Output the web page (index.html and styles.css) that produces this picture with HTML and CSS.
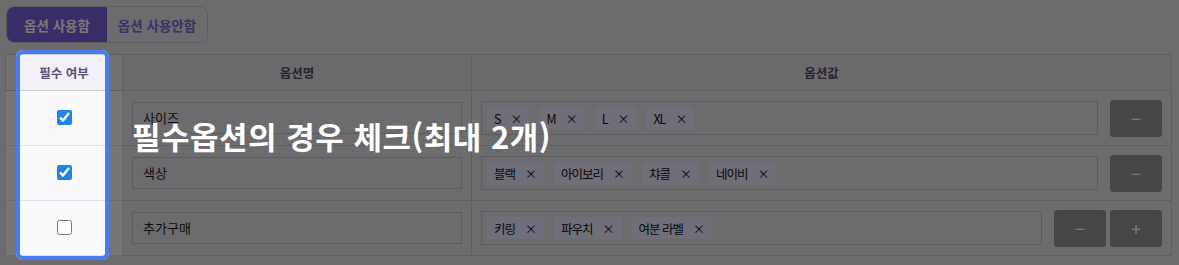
FILE: index.html
```html
<!DOCTYPE html>
<html lang="ko">
<head>
<meta charset="utf-8">
<link rel="stylesheet" href="styles.css">
</head>
<body>
<div class="page">
  <div class="toggle">
    <button class="toggle-btn is-active">옵션 사용함</button>
    <button class="toggle-btn">옵션 사용안함</button>
  </div>
  <table class="opt-table">
    <colgroup>
      <col class="col-req">
      <col class="col-name">
      <col class="col-val">
    </colgroup>
    <thead>
      <tr>
        <th class="th-req">필수 여부</th>
        <th>옵션명</th>
        <th>옵션값</th>
      </tr>
    </thead>
    <tbody>
      <tr>
        <td class="cell-req"><input type="checkbox" class="chk" checked></td>
        <td class="cell-name"><div class="text-input">사이즈</div></td>
        <td class="cell-val">
          <div class="val-row">
            <div class="tag-box">
              <span class="tag">S<span class="x">×</span></span>
              <span class="tag">M<span class="x">×</span></span>
              <span class="tag">L<span class="x">×</span></span>
              <span class="tag">XL<span class="x">×</span></span>
            </div>
            <div class="btns"><button class="sq-btn">−</button></div>
          </div>
        </td>
      </tr>
      <tr>
        <td class="cell-req"><input type="checkbox" class="chk" checked></td>
        <td class="cell-name"><div class="text-input">색상</div></td>
        <td class="cell-val">
          <div class="val-row">
            <div class="tag-box">
              <span class="tag">블랙<span class="x">×</span></span>
              <span class="tag">아이보리<span class="x">×</span></span>
              <span class="tag">챠콜<span class="x">×</span></span>
              <span class="tag">네이비<span class="x">×</span></span>
            </div>
            <div class="btns"><button class="sq-btn">−</button></div>
          </div>
        </td>
      </tr>
      <tr>
        <td class="cell-req"><input type="checkbox" class="chk"></td>
        <td class="cell-name"><div class="text-input">추가구매</div></td>
        <td class="cell-val">
          <div class="val-row">
            <div class="tag-box">
              <span class="tag">키링<span class="x">×</span></span>
              <span class="tag">파우치<span class="x">×</span></span>
              <span class="tag">여분 라벨<span class="x">×</span></span>
            </div>
            <div class="btns"><button class="sq-btn">−</button><button class="sq-btn">+</button></div>
          </div>
        </td>
      </tr>
    </tbody>
  </table>
</div>
<div class="spotlight"></div>
<div class="tip">필수옵션의 경우 체크(최대 2개)</div>
</body>
</html>
```

FILE: styles.css
```css
html, body {
  margin: 0;
  padding: 0;
  background: #e6e6e9;
  font-family: "Noto Sans CJK KR", "Noto Sans", "Liberation Sans", sans-serif;
  color: #333;
}
.page {
  padding: 6px 7px 0 5px;
}
.toggle {
  display: inline-flex;
  margin-left: 1px;
  border: 1px solid #c6c6cc;
  border-radius: 8px;
  overflow: hidden;
  height: 37px;
  box-sizing: border-box;
}
.toggle-btn {
  border: 0;
  background: #e6e6e9;
  font-family: inherit;
  font-size: 13.5px;
  font-weight: 700;
  color: #7f69d6;
  padding: 0;
  width: 100px;
  cursor: pointer;
}
.toggle-btn.is-active {
  background: #7a5ee0;
  color: #fff;
}
.opt-table {
  margin-top: 11px;
  width: 100%;
  border-collapse: collapse;
  table-layout: fixed;
}
.col-req { width: 117px; }
.col-name { width: 349px; }
.opt-table th,
.opt-table td {
  border: 1px solid #cbcbd0;
}
.opt-table th {
  height: 35px;
  background: #e3e1e8;
  color: #55486a;
  font-size: 12.5px;
  font-weight: 600;
  padding: 0;
}
.opt-table th.th-req {
  background: #f3f0f7;
  color: #5b4e72;
}
.opt-table td {
  height: 54px;
  padding: 0 9px;
  background: #e6e6e9;
}
.opt-table td.cell-req {
  background: #fafafc;
  text-align: center;
  border-color: #e0e0e6;
}
.chk {
  width: 15px;
  height: 15px;
  margin: 3px 0 0;
  accent-color: #1e84e6;
}
.cell-name { padding: 0 10px; }
.text-input {
  height: 32px;
  box-sizing: border-box;
  border: 1px solid #c4c4ca;
  padding: 0 10px;
  font-size: 13px;
  line-height: 30px;
  color: #1a1a1a;
}
.val-row {
  display: flex;
  align-items: center;
  gap: 12px;
}
.tag-box {
  flex: 1;
  height: 34px;
  box-sizing: border-box;
  border: 1px solid #c4c4ca;
  display: flex;
  align-items: center;
  gap: 10px;
  padding: 0 5px;
}
.tag {
  display: inline-flex;
  align-items: center;
  height: 22px;
  padding: 0 7px;
  border-radius: 3px;
  background: #eeeaff;
  font-size: 12.5px;
  letter-spacing: -1px;
  color: #111;
}
.x {
  margin-left: 10px;
  font-size: 12px;
  letter-spacing: 0;
}
.btns {
  display: flex;
  gap: 4px;
}
.sq-btn {
  width: 52px;
  height: 37px;
  border: 0;
  border-radius: 3px;
  background: #959595;
  color: #fff;
  font-family: inherit;
  font-size: 18px;
  padding: 0;
}
.spotlight {
  position: absolute;
  left: 16px;
  top: 50px;
  width: 85px;
  height: 202px;
  border: 4px solid #4a7bf0;
  border-radius: 7px;
  box-shadow: 0 0 0 3000px rgba(0, 0, 0, 0.53);
  pointer-events: none;
}
.tip {
  position: absolute;
  left: 132px;
  top: 118px;
  color: #fff;
  font-size: 31px;
  font-weight: 700;
  letter-spacing: 0.5px;
  line-height: 36px;
  white-space: nowrap;
}
```
